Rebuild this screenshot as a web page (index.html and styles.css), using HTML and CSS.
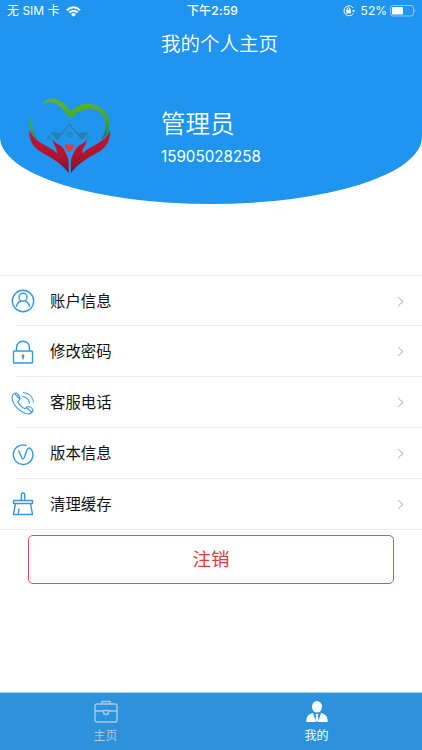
FILE: index.html
```html
<!DOCTYPE html>
<html lang="zh-CN">
<head>
<meta charset="utf-8">
<meta name="viewport" content="width=device-width, initial-scale=1">
<title>我的个人主页</title>
<link rel="stylesheet" href="styles.css">
</head>
<body>
<header class="hero">
  <div class="status">
    <div class="status-left"><span>无 SIM 卡</span>
      <svg width="15" height="11" viewBox="0 0 15 11" fill="none" stroke="#fff" stroke-width="2"><path d="M.9 4.2Q7.5-1.8 14.1 4.2M3.3 6.6Q7.5 2.8 11.7 6.6"/><path d="M5 8.2Q7.5 6 10 8.2L7.5 10.7Z" fill="#fff" stroke="none"/></svg>
    </div>
    <time class="status-time">下午2:59</time>
    <div class="status-right">
      <svg width="12" height="12" viewBox="0 0 12 12" fill="none" stroke="#fff"><path d="M10.2 3A5 5 0 1 0 10.2 8.5"/><path d="M9 5.2h3L10.5 7.4Z" fill="#fff" stroke="none"/><path d="M4.200 5V4a1.300 1.300 0 0 1 2.600 0v1"/><path d="M3.200 4.800h4.600v3.600H3.200Z" fill="#fff" stroke="none"/></svg>
      <span class="percent">52%</span>
      <svg width="27" height="12" viewBox="0 0 27 12"><rect x=".5" y=".5" width="23" height="10.500" rx="2.500" fill="none" stroke="#8fcaf8"/><rect x="2" y="2" width="11" height="7.500" rx="1" fill="#fff"/><path d="M24.700 3.800Q26.500 5.700 24.700 7.800Z" fill="#8fcaf8"/></svg>
    </div>
  </div>
  <h1 class="title">我的个人主页</h1>
  <div class="profile">
    <svg class="logo" width="84" height="78" viewBox="0 0 84 78">
      <defs>
        <linearGradient id="leaf" x1="0" y1="0" x2="0" y2="1"><stop stop-color="#61b52b"/><stop offset=".55" stop-color="#43a52b"/><stop offset="1" stop-color="#15785a"/></linearGradient>
        <linearGradient id="hand" x1="0" y1="0" x2="0" y2="1"><stop stop-color="#c01834"/><stop offset=".6" stop-color="#b3132c"/><stop offset="1" stop-color="#6e1735"/></linearGradient>
      </defs>
      <path fill="url(#leaf)" d="M14 6.500C17 1.500 22 0 27 1C34 2.500 39 8 43 13.500C49 7 57 4.500 65 6.500C74 8.500 80 15 81.500 24C82 33 78 39 72 42.500C77 36 78.500 29 77 22.500C74.500 13.500 67 9.500 58 11.500C51 13 46 17 43 21C37 14 33 7.500 26 5C21.500 3.500 18 4.500 14 6.500Z"/>
      <path fill="url(#leaf)" d="M3 19C3.500 28 5.500 36 10 42C3 37.500 0 29 3 19Z"/>
      <path fill="#287fae" d="M22 34 34 35 29 42ZM61 34 49 35 54 42Z"/>
      <path fill="none" stroke="#347daf" stroke-width="1.500" d="M29 41.500 41.500 26.500 54 41.500"/>
      <path fill="none" stroke="#2689ae" d="M39.500 34h4.500v4.500h-4.500zM41.700 34v4.500M39.500 36.200h4.500M20 38h3v3h-3zM59.500 38h3v3h-3z"/>
      <path fill="url(#hand)" d="M1.500 32C4 38.500 8 42 13 45C19 48.500 25 51 29 55.500C29.500 50 25 46.500 24.500 42C28 46 33 46.500 36 51.500C38.500 56 40.300 59 40.700 65V75C35 68 31 65 25 61C18 56.500 10 53.500 5.500 47.500C2.500 43 .5 37 1.500 32Z"/>
      <path fill="url(#hand)" d="M82 32C79.500 38.500 75.500 42 70.500 45C64.500 48.500 58.500 51 54.500 55.500C54 50 58.500 46.500 59 42C55.500 46 50.500 46.500 47.500 51.500C45 56 43.200 59 42.800 65V75C48.500 68 52.500 65 58.500 61C65.500 56.500 73.500 53.500 78 47.500C81 43 83 37 82 32Z"/>
      <path fill="#e6383f" d="M41.500 54C36.500 51 36 46.500 38.500 46Q41 46 41.500 48Q43 45 45 46.500C47 49 44 52.500 41.500 54Z"/>
    </svg>
    <div class="identity"><div class="name">管理员</div><div class="phone">15905028258</div></div>
  </div>
</header>
<main>
  <ul class="menu">
    <li class="row"><svg class="icon" viewBox="0 0 24 24"><circle cx="12" cy="12" r="10.700"/><circle cx="12" cy="8.300" r="4"/><path d="M5.500 17.800C6 14.500 8 12.500 10 12M14 12C16.300 12.700 18 14.500 18.500 17.800"/></svg><span class="label">账户信息</span><svg class="chevron" viewBox="0 0 7 11"><path d="M1 .8 5.800 5.500 1 10.200"/></svg></li>
    <li class="row"><svg class="icon" viewBox="0 0 24 24"><rect x="2.500" y="11" width="19" height="12" rx=".8"/><path d="M5.500 11V7.700a6.500 6.500 0 0 1 13 0V11M12 16.500v3"/><circle cx="12" cy="16" r=".7"/></svg><span class="label">修改密码</span><svg class="chevron" viewBox="0 0 7 11"><path d="M1 .8 5.800 5.500 1 10.200"/></svg></li>
    <li class="row"><svg class="icon thin" viewBox="0 0 24 24"><path d="M5 2C3 2 1 4 1 6.500C2 15 10 22 17.500 23C20 23 22 21 22 19C21 17 18.500 15.500 17 15.500C15.500 15.500 15 18 13.500 17.500C11 16.500 7.500 13 7 11C7 9.500 9.500 9 9 7C8.500 5 6.500 2 5 2ZM4 3 9 8M15.500 16.500 20.500 21M11.500 5.500C15 6 18 8.500 18.500 12.500M12 1.500C18 2 22 6 22.500 11.500"/></svg><span class="label">客服电话</span><svg class="chevron" viewBox="0 0 7 11"><path d="M1 .8 5.800 5.500 1 10.200"/></svg></li>
    <li class="row"><svg class="icon" viewBox="0 0 24 24"><path d="M15.500 3.500A9.800 9.800 0 1 0 21.200 9M7.500 8.500 11 16Q12 18 13 16L16.300 7.500Q18.500 4 21.200 9"/></svg><span class="label">版本信息</span><svg class="chevron" viewBox="0 0 7 11"><path d="M1 .8 5.800 5.500 1 10.200"/></svg></li>
    <li class="row"><svg class="icon" viewBox="0 0 24 24"><path d="M10.300 8.500V2.700Q10.300 1 12 1Q13.700 1 13.700 2.700V8.500M2.500 8.500H21.500V11.500H2.500ZM4.500 11.500 2.500 22.500H21.500L19.500 11.500M8 16.500 7.300 22"/></svg><span class="label">清理缓存</span><svg class="chevron" viewBox="0 0 7 11"><path d="M1 .8 5.800 5.500 1 10.200"/></svg></li>
  </ul>
  <button class="logout" type="button">注销</button>
</main>
<nav class="tabs">
  <a class="tab"><svg width="24" height="24" viewBox="0 0 24 24" fill="none" stroke="currentColor" stroke-width="1.400"><rect x="1" y="4" width="22" height="18" rx="2"/><path d="M8 4V1.500h8V4M1 11h8.500M14.500 11H23M9.500 10.500h5V12a2.500 2.500 0 0 1-5 0Z"/></svg><span>主页</span></a>
  <a class="tab active"><svg width="24" height="24" viewBox="0 0 24 24" fill="currentColor"><ellipse cx="12" cy="6.800" rx="5" ry="5.800"/><path d="M1.300 22C1.300 16.500 3 14.500 8 13L11 22ZM22.700 22C22.700 16.500 21 14.500 16 13L13 22ZM10.500 14h3L12.800 16 13.500 20 12 22 10.500 20 11.200 16Z"/></svg><span>我的</span></a>
</nav>
</body>
</html>
```

FILE: styles.css
```css
* { box-sizing: border-box; }
body {
  margin: 0;
  height: 750px;
  display: flex;
  flex-direction: column;
  background: #fff;
  color: #111;
  font-family: Inter, "Noto Sans CJK SC", sans-serif;
}
svg { display: block; flex: none; }
.hero {
  height: 204px;
  flex: none;
  background: #1f95ef;
  color: #fff;
  border-radius: 0 0 50% 50% / 0 0 67px 67px;
}
.status {
  display: grid;
  grid-template-columns: 1fr auto 1fr;
  align-items: center;
  height: 22px;
  padding: 0 5px 0 7px;
  font-size: 12px;
  line-height: 22px;
}
.status-left, .status-right { display: flex; align-items: center; gap: 6px; }
.status-right { justify-content: flex-end; }
.percent { margin-right: -3px; }
.status-time { font-weight: 500; letter-spacing: .2px; padding-left: 1px; }
.title {
  margin: 8px 0 0 161px;
  font-size: 19.5px;
  font-weight: 350;
  line-height: 28px;
}
.profile { display: flex; margin: 39px 0 0 28px; }
.logo { margin-top: 1px; }
.identity { margin: 9px 0 0 49px; }
.name { font-size: 24.5px; line-height: 36px; font-weight: 350; }
.phone { margin-top: 5px; font-size: 15.2px; line-height: 20px; }
main { flex: 1; }
.menu {
  list-style: none;
  margin: 71px 0 0;
  padding: 0;
  border-top: 1px solid #e9e9e9;
  border-bottom: 1px solid #efefef;
}
.row {
  display: flex;
  align-items: center;
  height: 51px;
  padding: 0 18px 0 11px;
}
.row:first-child { height: 50px; }
.row:last-child { height: 50px; }
.row:not(:last-child) {
  background: linear-gradient(#ebebeb, #ebebeb) 16px 100% / 100% 1px no-repeat;
}
.icon {
  width: 24px;
  height: 24px;
  fill: none;
  stroke: #3497e5;
  stroke-width: 1.4;
  stroke-linejoin: round;
}
.thin { stroke-width: 1.1; }
.label { flex: 1; margin: 1px 0 0 15px; font-size: 15.4px; line-height: 24px; }
.chevron { width: 7px; height: 11px; fill: none; stroke: #c3c3c3; stroke-width: 1.1; }
.logout {
  display: block;
  width: 366px;
  height: 49px;
  margin: 5px 0 0 28px;
  padding: 0;
  border: 1px solid #dc5355;
  border-radius: 5px;
  background: #fff;
  color: #dc3e3b;
  font: 18.5px/47px Inter, "Noto Sans CJK SC", sans-serif;
}
.tabs {
  display: flex;
  height: 58px;
  flex: none;
  border-top: 1px solid #a5d1ef;
  background: #2c92dc;
}
.tab {
  flex: 1;
  display: flex;
  flex-direction: column;
  align-items: center;
  padding: 7px 0 0;
  color: #a9c9e1;
  font-size: 12px;
  line-height: 18px;
}
.tab span { margin-top: 3px; }
.active { color: #fff; }
```
